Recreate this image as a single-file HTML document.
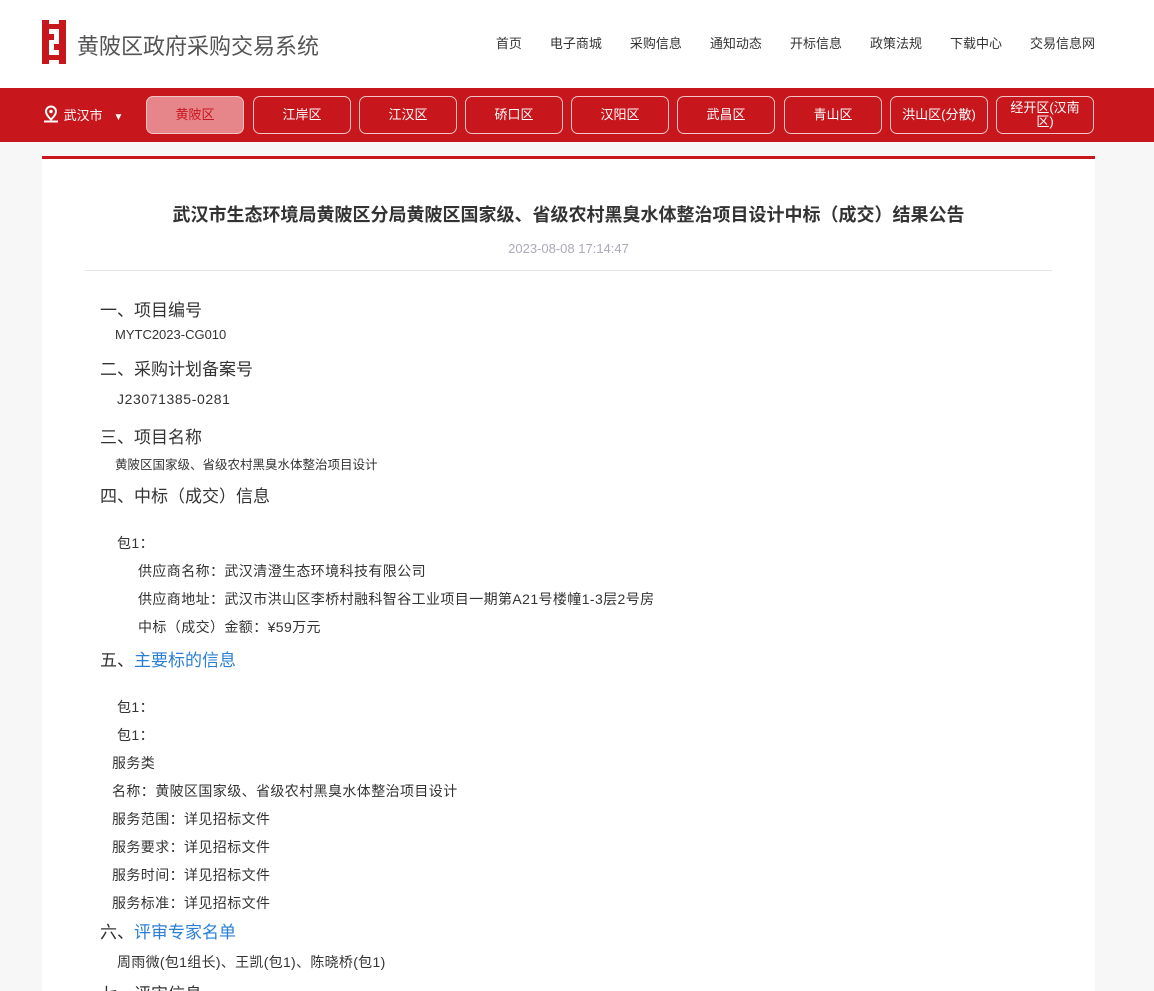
<!DOCTYPE html>
<html style="width:1154px;height:991px;overflow:hidden"><head><meta charset="utf-8"><style>
*{margin:0;padding:0;box-sizing:border-box}
body{width:1154px;height:991px;overflow:hidden;background:#f7f7f7;font-family:"Liberation Sans","Noto Sans CJK SC",sans-serif;color:#333;position:relative}
.top{height:88px;background:#fff;position:relative}
.logo{position:absolute;left:42px;top:20px}
.title{position:absolute;left:77px;top:29px;font-size:22px;color:#555}
.menu{position:absolute;right:59px;top:33px;font-size:13px;color:#333}
.menu span{margin-left:28px}
.bar{height:54px;background:#c8161d;position:relative}
.city{position:absolute;left:42px;top:17px;color:#fff;font-size:13px}
.btn{position:absolute;top:8px;width:98px;height:38px;border:1px solid #f3c4c6;border-radius:7px;color:#fff;font-size:13px;text-align:center;line-height:36px}
.card{position:absolute;left:42px;top:156px;width:1053px;height:835px;background:#fff;border-top:3px solid #c8161d}
h1{font-size:18px;font-weight:bold;text-align:center;margin-top:42px;color:#333}
.date{text-align:center;font-size:13px;color:#aab;margin-top:14px}
.hr{margin:14px 43px 0;border-top:1px solid #e5e5e5}
.t{position:absolute;font-size:14px;color:#333;white-space:nowrap;letter-spacing:0.4px}
.h{font-size:17px;letter-spacing:0}
.blue{color:#2a7fd4}
</style></head><body>
<div class="top">
<svg class="logo" width="24" height="44" viewBox="0 0 24 44"><rect x="0" y="0" width="7" height="44" fill="#c8161d"/><rect x="17" y="0" width="7" height="44" fill="#c8161d"/><rect x="7" y="4" width="10" height="5" fill="#c8161d"/><rect x="7" y="14" width="5" height="6" fill="#c8161d"/><rect x="12" y="24" width="5" height="6" fill="#c8161d"/><rect x="7" y="35" width="10" height="5" fill="#c8161d"/></svg>
<div class="title">黄陂区政府采购交易系统</div>
<div class="menu"><span>首页</span><span>电子商城</span><span>采购信息</span><span>通知动态</span><span>开标信息</span><span>政策法规</span><span>下载中心</span><span>交易信息网</span></div>
</div>
<div class="bar">
<div class="city"><svg width="18" height="18" viewBox="0 0 18 18" style="vertical-align:-3px"><path d="M9 1.5a5 5 0 0 0-5 5c0 3.5 5 8 5 8s5-4.5 5-8a5 5 0 0 0-5-5z" fill="none" stroke="#fff" stroke-width="2"/><circle cx="9" cy="6.5" r="1.7" fill="#fff"/><path d="M2 16.5h14" stroke="#fff" stroke-width="2"/></svg> 武汉市 &nbsp;&nbsp;<span style="font-size:10px">▼</span></div>
<div class="btn" style="left:146px;background:#e6868b;color:#c8161d">黄陂区</div>
<div class="btn" style="left:253px">江岸区</div>
<div class="btn" style="left:359px">江汉区</div>
<div class="btn" style="left:465px">硚口区</div>
<div class="btn" style="left:571px">汉阳区</div>
<div class="btn" style="left:677px">武昌区</div>
<div class="btn" style="left:784px">青山区</div>
<div class="btn" style="left:890px">洪山区(分散)</div>
<div class="btn" style="left:996px;line-height:14px;padding-top:4px">经开区(汉南<br>区)</div>
</div>
<div class="card">
<h1>武汉市生态环境局黄陂区分局黄陂区国家级、省级农村黑臭水体整治项目设计中标（成交）结果公告</h1>
<div class="date">2023-08-08 17:14:47</div>
<div class="hr"></div>
</div>
<div class="t h" style="left:100px;top:296px">一、项目编号</div>
<div class="t" style="left:115px;top:327px;font-size:13px;letter-spacing:0">MYTC2023-CG010</div>
<div class="t h" style="left:100px;top:355px">二、采购计划备案号</div>
<div class="t" style="left:117px;top:391px;letter-spacing:0.6px">J23071385-0281</div>
<div class="t h" style="left:100px;top:423px">三、项目名称</div>
<div class="t" style="left:115px;top:454px;font-size:12.5px;letter-spacing:0">黄陂区国家级、省级农村黑臭水体整治项目设计</div>
<div class="t h" style="left:100px;top:482px">四、中标（成交）信息</div>
<div class="t" style="left:117px;top:533px">包1：</div>
<div class="t" style="left:138px;top:561px">供应商名称：武汉清澄生态环境科技有限公司</div>
<div class="t" style="left:138px;top:589px">供应商地址：武汉市洪山区李桥村融科智谷工业项目一期第A21号楼幢1-3层2号房</div>
<div class="t" style="left:138px;top:617px">中标（成交）金额：¥59万元</div>
<div class="t h" style="left:100px;top:646px">五、<span class="blue">主要标的信息</span></div>
<div class="t" style="left:117px;top:697px">包1：</div>
<div class="t" style="left:117px;top:725px">包1：</div>
<div class="t" style="left:112px;top:753px">服务类</div>
<div class="t" style="left:112px;top:781px">名称：黄陂区国家级、省级农村黑臭水体整治项目设计</div>
<div class="t" style="left:112px;top:809px">服务范围：详见招标文件</div>
<div class="t" style="left:112px;top:837px">服务要求：详见招标文件</div>
<div class="t" style="left:112px;top:865px">服务时间：详见招标文件</div>
<div class="t" style="left:112px;top:893px">服务标准：详见招标文件</div>
<div class="t h" style="left:100px;top:918px">六、<span class="blue">评审专家名单</span></div>
<div class="t" style="left:117px;top:952px;letter-spacing:0.3px">周雨微(包1组长)、王凯(包1)、陈晓桥(包1)</div>
<div class="t h" style="left:100px;top:980px">七、评审信息</div>
</body></html>
